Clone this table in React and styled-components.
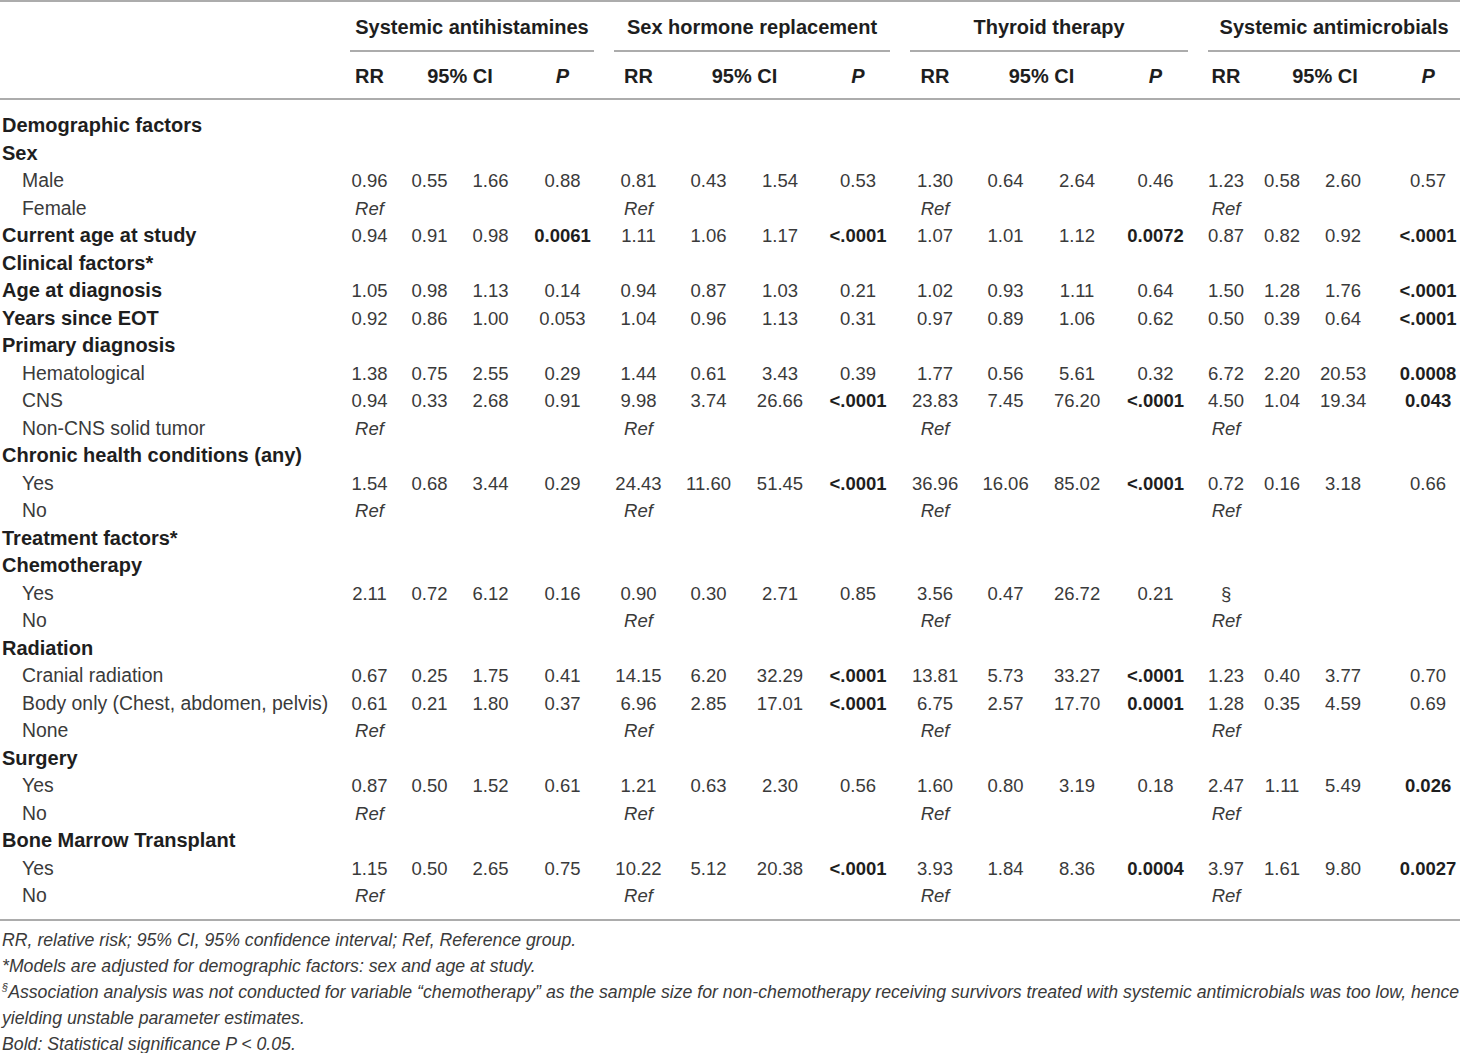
import React from 'react';
import styled, { createGlobalStyle } from 'styled-components';

const GlobalStyle = createGlobalStyle`
  html, body {
    margin: 0;
    padding: 0;
    background: #ffffff;
  }
  body {
    font-family: "Liberation Sans", Arial, sans-serif;
    color: #333333;
  }
`;

// column widths, label first, then 4 groups of RR / CI low / CI high / P
const colWidths = [340, 59, 61, 61, 83, 69, 71, 72, 84, 70, 71, 72, 85, 56, 56, 86, 64];
const groupPads = [
    [10, 10],
    [10, 10],
    [10, 10],
    [10, 0],
];
const groups = ['Systemic antihistamines', 'Sex hormone replacement', 'Thyroid therapy', 'Systemic antimicrobials'];

const R = 'ref';
const S = '§';
const v = (rr, lo, hi, p, b) => ({ rr, lo, hi, p, b: !!b });

const rows = [
    { label: 'Demographic factors', kind: 'head' },
    { label: 'Sex', kind: 'head' },
    { label: 'Male', kind: 'level', cells: [v('0.96', '0.55', '1.66', '0.88'), v('0.81', '0.43', '1.54', '0.53'), v('1.30', '0.64', '2.64', '0.46'), v('1.23', '0.58', '2.60', '0.57')] },
    { label: 'Female', kind: 'level', cells: [R, R, R, R] },
    { label: 'Current age at study', kind: 'head', cells: [v('0.94', '0.91', '0.98', '0.0061', 1), v('1.11', '1.06', '1.17', '<.0001', 1), v('1.07', '1.01', '1.12', '0.0072', 1), v('0.87', '0.82', '0.92', '<.0001', 1)] },
    { label: 'Clinical factors*', kind: 'head' },
    { label: 'Age at diagnosis', kind: 'head', cells: [v('1.05', '0.98', '1.13', '0.14'), v('0.94', '0.87', '1.03', '0.21'), v('1.02', '0.93', '1.11', '0.64'), v('1.50', '1.28', '1.76', '<.0001', 1)] },
    { label: 'Years since EOT', kind: 'head', cells: [v('0.92', '0.86', '1.00', '0.053'), v('1.04', '0.96', '1.13', '0.31'), v('0.97', '0.89', '1.06', '0.62'), v('0.50', '0.39', '0.64', '<.0001', 1)] },
    { label: 'Primary diagnosis', kind: 'head' },
    { label: 'Hematological', kind: 'level', cells: [v('1.38', '0.75', '2.55', '0.29'), v('1.44', '0.61', '3.43', '0.39'), v('1.77', '0.56', '5.61', '0.32'), v('6.72', '2.20', '20.53', '0.0008', 1)] },
    { label: 'CNS', kind: 'level', cells: [v('0.94', '0.33', '2.68', '0.91'), v('9.98', '3.74', '26.66', '<.0001', 1), v('23.83', '7.45', '76.20', '<.0001', 1), v('4.50', '1.04', '19.34', '0.043', 1)] },
    { label: 'Non-CNS solid tumor', kind: 'level', cells: [R, R, R, R] },
    { label: 'Chronic health conditions (any)', kind: 'head' },
    { label: 'Yes', kind: 'level', cells: [v('1.54', '0.68', '3.44', '0.29'), v('24.43', '11.60', '51.45', '<.0001', 1), v('36.96', '16.06', '85.02', '<.0001', 1), v('0.72', '0.16', '3.18', '0.66')] },
    { label: 'No', kind: 'level', cells: [R, R, R, R] },
    { label: 'Treatment factors*', kind: 'head' },
    { label: 'Chemotherapy', kind: 'head' },
    { label: 'Yes', kind: 'level', cells: [v('2.11', '0.72', '6.12', '0.16'), v('0.90', '0.30', '2.71', '0.85'), v('3.56', '0.47', '26.72', '0.21'), S] },
    { label: 'No', kind: 'level', cells: [null, R, R, R] },
    { label: 'Radiation', kind: 'head' },
    { label: 'Cranial radiation', kind: 'level', cells: [v('0.67', '0.25', '1.75', '0.41'), v('14.15', '6.20', '32.29', '<.0001', 1), v('13.81', '5.73', '33.27', '<.0001', 1), v('1.23', '0.40', '3.77', '0.70')] },
    { label: 'Body only (Chest, abdomen, pelvis)', kind: 'level', cells: [v('0.61', '0.21', '1.80', '0.37'), v('6.96', '2.85', '17.01', '<.0001', 1), v('6.75', '2.57', '17.70', '0.0001', 1), v('1.28', '0.35', '4.59', '0.69')] },
    { label: 'None', kind: 'level', cells: [R, R, R, R] },
    { label: 'Surgery', kind: 'head' },
    { label: 'Yes', kind: 'level', cells: [v('0.87', '0.50', '1.52', '0.61'), v('1.21', '0.63', '2.30', '0.56'), v('1.60', '0.80', '3.19', '0.18'), v('2.47', '1.11', '5.49', '0.026', 1)] },
    { label: 'No', kind: 'level', cells: [R, R, R, R] },
    { label: 'Bone Marrow Transplant', kind: 'head' },
    { label: 'Yes', kind: 'level', cells: [v('1.15', '0.50', '2.65', '0.75'), v('10.22', '5.12', '20.38', '<.0001', 1), v('3.93', '1.84', '8.36', '0.0004', 1), v('3.97', '1.61', '9.80', '0.0027', 1)] },
    { label: 'No', kind: 'level', cells: [R, R, R, R] },
];

const renderGroup = (cell, g) => {
    const pr = g === 3 ? [0, 0, 20, 0] : [0, 0, 0, 0];
    if (cell === R || cell === S) {
        return [
            <ValueCell key={`${g}a`} $italic={cell === R}>{cell === R ? 'Ref' : '§'}</ValueCell>,
            <ValueCell key={`${g}b`} />,
            <ValueCell key={`${g}c`} $pr={pr[2]} />,
            <ValueCell key={`${g}d`} />,
        ];
    }
    if (!cell) {
        return [0, 1, 2, 3].map((i) => <ValueCell key={`${g}${i}`} $pr={pr[i]} />);
    }
    return [
        <ValueCell key={`${g}a`}>{cell.rr}</ValueCell>,
        <ValueCell key={`${g}b`}>{cell.lo}</ValueCell>,
        <ValueCell key={`${g}c`} $pr={pr[2]}>{cell.hi}</ValueCell>,
        <ValueCell key={`${g}d`} $bold={cell.b}>{cell.p}</ValueCell>,
    ];
};

export default function App() {
    return (
        <>
            <GlobalStyle />
            <Page>
                <Table>
                    <colgroup>
                        {colWidths.map((w, i) => (
                            <col key={i} style={{ width: w }} />
                        ))}
                    </colgroup>
                    <thead>
                        <tr>
                            <GroupTh />
                            {groups.map((name, i) => (
                                <GroupTh key={name} colSpan={4} $pl={groupPads[i][0]} $pr={groupPads[i][1]}>
                                    <GroupLabel>{name}</GroupLabel>
                                </GroupTh>
                            ))}
                        </tr>
                        <tr>
                            <SubTh />
                            {groups.map((name) => (
                                <React.Fragment key={name}>
                                    <SubTh>RR</SubTh>
                                    <SubTh colSpan={2}>95% CI</SubTh>
                                    <SubTh><em>P</em></SubTh>
                                </React.Fragment>
                            ))}
                        </tr>
                    </thead>
                    <tbody>
                        {rows.map((row, i) => (
                            <tr key={i}>
                                <LabelCell $kind={row.kind}>{row.label}</LabelCell>
                                {row.cells
                                    ? row.cells.map((c, g) => renderGroup(c, g))
                                    : <ValueCell colSpan={16} />}
                            </tr>
                        ))}
                    </tbody>
                </Table>
                <Notes>
                    <Note>RR, relative risk; 95% CI, 95% confidence interval; Ref, Reference group.</Note>
                    <Note>*Models are adjusted for demographic factors: sex and age at study.</Note>
                    <Note>
                        <sup>§</sup>Association analysis was not conducted for variable “chemotherapy” as the sample size for non-chemotherapy receiving survivors treated with systemic antimicrobials was too low, hence
                        <br />
                        yielding unstable parameter estimates.
                    </Note>
                    <Note>Bold: Statistical significance P &lt; 0.05.</Note>
                </Notes>
            </Page>
        </>
    );
}

const Page = styled.div`
  width: 1460px;
`;

const Table = styled.table`
  width: 1460px;
  table-layout: fixed;
  border-collapse: separate;
  border-spacing: 0;
  border-top: 2px solid #acacac;

  tbody tr:first-child td {
    padding-top: 12px;
  }
  tbody tr:last-child td {
    padding-bottom: 9px;
    border-bottom: 2px solid #acacac;
  }
`;

const GroupTh = styled.th`
  padding: 0 ${({ $pr }) => $pr ?? 0}px 0 ${({ $pl }) => $pl ?? 0}px;
  font-weight: 700;
`;

const GroupLabel = styled.div`
  padding-top: 2px;
  line-height: 46px;
  font-size: 20px;
  color: #1e1e1e;
  text-align: center;
  white-space: nowrap;
  border-bottom: 2px solid #acacac;
`;

const SubTh = styled.th`
  padding: 2px 0 0;
  line-height: 44px;
  font-size: 20px;
  font-weight: 700;
  color: #1e1e1e;
  text-align: center;
  white-space: nowrap;
  border-bottom: 2px solid #acacac;
`;

const LabelCell = styled.td`
  padding: 0 0 0 ${({ $kind }) => ($kind === 'level' ? 22 : 2)}px;
  line-height: 27.5px;
  font-size: ${({ $kind }) => ($kind === 'level' ? 19.4 : 20)}px;
  font-weight: ${({ $kind }) => ($kind === 'level' ? 400 : 700)};
  color: ${({ $kind }) => ($kind === 'level' ? '#3a3a3a' : '#1e1e1e')};
  white-space: nowrap;
`;

const ValueCell = styled.td`
  padding: 0 ${({ $pr }) => $pr || 0}px 0 0;
  line-height: 27.5px;
  font-size: 18.5px;
  text-align: center;
  white-space: nowrap;
  font-weight: ${({ $bold }) => ($bold ? 700 : 400)};
  font-style: ${({ $italic }) => ($italic ? 'italic' : 'normal')};
  color: ${({ $bold }) => ($bold ? '#1e1e1e' : '#3a3a3a')};
`;

const Notes = styled.div`
  padding-top: 6px;
`;

const Note = styled.p`
  margin: 0;
  padding-left: 2px;
  font-size: 17.7px;
  line-height: 26px;
  font-style: italic;
  color: #3a3a3a;
  white-space: nowrap;

  sup {
    font-size: 11px;
    line-height: 0;
  }
`;
